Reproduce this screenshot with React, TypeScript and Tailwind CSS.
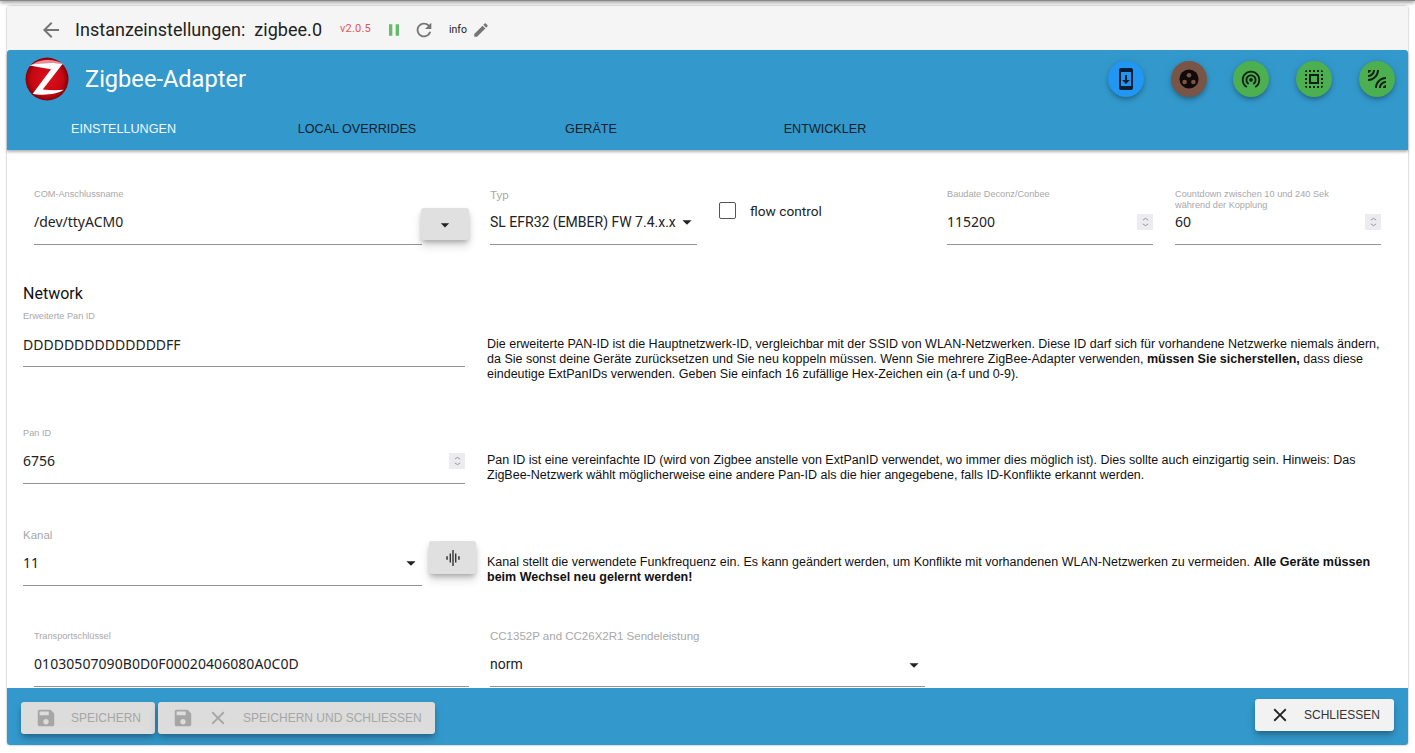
import React from 'react';

const FONT = 'font-["Roboto",sans-serif]';

const paths = {
	back: 'M20 11H7.83l5.59-5.59L12 4l-8 8 8 8 1.41-1.41L7.83 13H20v-2z',
	pause: 'M6 19h4V5H6v14zm8-14v14h4V5h-4z',
	refresh:
		'M17.65 6.35C16.2 4.9 14.21 4 12 4c-4.42 0-7.99 3.58-7.99 8s3.57 8 7.99 8c3.73 0 6.84-2.55 7.73-6h-2.08c-.82 2.33-3.04 4-5.65 4-3.31 0-6-2.69-6-6s2.69-6 6-6c1.66 0 3.14.69 4.22 1.78L13 11h7V4l-2.35 2.35z',
	edit: 'M3 17.25V21h3.75L17.81 9.94l-3.75-3.75L3 17.25zM20.71 7.04c.39-.39.39-1.02 0-1.41l-2.34-2.34c-.39-.39-1.02-.39-1.41 0l-1.83 1.83 3.75 3.75 1.83-1.83z',
	save: 'M17 3H5c-1.11 0-2 .9-2 2v14c0 1.1.89 2 2 2h14c1.1 0 2-.9 2-2V7l-4-4zm-5 16c-1.66 0-3-1.34-3-3s1.34-3 3-3 3 1.34 3 3-1.34 3-3 3zm3-10H5V5h10v4z',
	close:
		'M19 6.41L17.59 5 12 10.59 6.41 5 5 6.41 10.59 12 5 17.59 6.41 19 12 13.41 17.59 19 19 17.59 13.41 12z',
	drop: 'M7 10l5 5 5-5z',
	phone:
		'M17 1.01L7 1c-1.1 0-2 .9-2 2v18c0 1.1.9 2 2 2h10c1.1 0 2-.9 2-2V3c0-1.1-.9-1.99-2-1.99zM17 19H7V5h10v14zm-1-6h-3V8h-2v5H8l4 4 4-4z',
	tether:
		'M12 11c-1.1 0-2 .9-2 2s.9 2 2 2 2-.9 2-2-.9-2-2-2zm6 2c0-3.31-2.69-6-6-6s-6 2.69-6 6c0 2.22 1.21 4.15 3 5.19l1-1.74c-1.19-.7-2-1.97-2-3.45 0-2.21 1.79-4 4-4s4 1.79 4 4c0 1.48-.81 2.75-2 3.45l1 1.74c1.79-1.04 3-2.97 3-5.19zM12 3C6.48 3 2 7.48 2 13c0 3.7 2.01 6.92 4.99 8.65l1-1.73C5.61 18.53 4 15.96 4 13c0-4.42 3.58-8 8-8s8 3.58 8 8c0 2.96-1.61 5.53-4 6.92l1 1.73c2.99-1.73 5-4.95 5-8.65 0-5.52-4.48-10-10-10z',
	select:
		'M3 5h2V3c-1.1 0-2 .9-2 2zm0 8h2v-2H3v2zm4 8h2v-2H7v2zM3 9h2V7H3v2zm10-6h-2v2h2V3zm6 0v2h2c0-1.1-.9-2-2-2zM5 21v-2H3c0 1.1.9 2 2 2zm-2-4h2v-2H3v2zM9 3H7v2h2V3zm2 18h2v-2h-2v2zm8-8h2v-2h-2v2zm0 8c1.1 0 2-.9 2-2h-2v2zm0-12h2V7h-2v2zm0 8h2v-2h-2v2zm-4 4h2v-2h-2v2zm0-16h2V3h-2v2zM7 17h10V7H7v10zm2-8h6v6H9V9z',
	leak:
		'M6 3H3v3c1.66 0 3-1.34 3-3zm8 0h-2c0 4.97-4.03 9-9 9v2c6.07 0 11-4.93 11-11zm-4 0H8c0 2.76-2.24 5-5 5v2c3.87 0 7-3.13 7-7zm0 18h2c0-4.97 4.03-9 9-9v-2c-6.07 0-11 4.93-11 11zm8 0h3v-3c-1.66 0-3 1.34-3 3zm-4 0h2c0-2.76 2.24-5 5-5v-2c-3.87 0-7 3.13-7 7z',
	wave: 'M5.3 10.3h1.5v3.4H5.3zM8.6 7.5h1.4v9H8.6zM11.3 4h1.4v16h-1.4zM14 7.5h1.4v9H14zM17.2 10.3h1.5v3.4h-1.5z',
};

const Icon: React.FC<{ d: string; className?: string }> = ({ d, className }) => (
	<svg viewBox="0 0 24 24" fill="currentColor" className={className}>
		<path d={d} />
	</svg>
);

const Logo = () => (
	<svg viewBox="0 0 44 44" className="w-[44px] h-[44px] shrink-0">
		<defs>
			<radialGradient id="zb" cx="50%" cy="50%" r="52%">
				<stop offset="0%" stopColor="#e0101c" />
				<stop offset="72%" stopColor="#c40812" />
				<stop offset="100%" stopColor="#7a0008" />
			</radialGradient>
		</defs>
		<circle cx="22" cy="22" r="21.5" fill="url(#zb)" />
		<path d="M6 8.5 C14 1.5 30 1.5 38 7 C28 5.5 14 5.5 6 8.5z" fill="#f08a8f" />
		<path
			d="M4.3 8.3 C14 5.5 28 5.5 37.7 6.7 L17.7 32.5 C25 33.5 32 33.5 38.7 32.8 C32 38 16 38.5 7.7 36.7 L26 12.3 C18 11 10 9.5 4.3 8.3z"
			fill="#fff"
		/>
	</svg>
);

const Stepper = () => (
	<span className="w-4 h-4 bg-[#ebebf0] flex flex-col items-center justify-center gap-[2px] shrink-0">
		<svg viewBox="0 0 8 3.5" className="w-[7px] h-[4px] text-[#777]">
			<path d="M1 3l3-2 3 2" fill="none" stroke="currentColor" strokeWidth="0.8" />
		</svg>
		<svg viewBox="0 0 8 3.5" className="w-[7px] h-[4px] text-[#777]">
			<path d="M1 .5l3 2 3-2" fill="none" stroke="currentColor" strokeWidth="0.8" />
		</svg>
	</span>
);

const Field: React.FC<{
	label: React.ReactNode;
	value: string;
	small?: boolean;
	className?: string;
	right?: React.ReactNode;
	valueClass?: string;
}> = ({ label, value, small, className, right, valueClass }) => (
	<div className={className}>
		<div
			className={
				small
					? 'h-[14px] pt-[1px] text-[9.2px] leading-[11px] text-[#a8a8a8] font-["Liberation_Sans",sans-serif]'
					: 'h-[14px] text-[11.5px] leading-[12px] text-[#a8a8a8] font-["Liberation_Sans",sans-serif]'
			}
		>
			{label}
		</div>
		<div
			className={`h-[43px] border-b border-[#949494] flex items-center justify-between pb-[3px] text-[14px] text-[#222] whitespace-nowrap ${
				valueClass ?? "font-['Noto_Sans',sans-serif]"
			}`}
		>
			<span>{value}</span>
			{right}
		</div>
	</div>
);

const Drop = () => <Icon d={paths.drop} className="w-[22px] h-[22px] text-[#222] shrink-0" />;

const Desc: React.FC<{ children: React.ReactNode; className?: string }> = ({ children, className }) => (
	<p className={`text-[12.5px] leading-[15px] text-[#111] font-["Liberation_Sans",sans-serif] ${className ?? ''}`}>
		{children}
	</p>
);

const FabButton: React.FC<{ bg: string; children: React.ReactNode }> = ({ bg, children }) => (
	<div
		className={`w-[36px] h-[36px] rounded-full flex items-center justify-center text-[#111] shadow-[0_3px_5px_-1px_rgba(0,0,0,0.3),0_1px_10px_0_rgba(0,0,0,0.12)] ${bg}`}
	>
		{children}
	</div>
);

const tabs = [
	{ name: 'EINSTELLUNGEN', w: 'w-[233px]', color: 'text-[#f2f7fb]' },
	{ name: 'LOCAL OVERRIDES', w: 'w-[234px]', color: 'text-[#10202b]' },
	{ name: 'GERÄTE', w: 'w-[234px]', color: 'text-[#10202b]' },
	{ name: 'ENTWICKLER', w: 'w-[234px]', color: 'text-[#10202b]' },
];

const BTN_SHADOW = 'shadow-[0_3px_5px_-1px_rgba(0,0,0,0.25),0_6px_10px_0_rgba(0,0,0,0.14)]';

const App: React.FC = () => {
	return (
		<div className={`relative h-[753px] w-[1415px] overflow-hidden bg-white pt-[6px] ${FONT}`}>
			{/* shadow from the bar above the page */}
			<div className="absolute left-0 right-0 -top-[2px] h-[3px] bg-[#888] shadow-[0_1px_4px_rgba(0,0,0,0.6)]" />
			<div className="ml-[7px] mr-[7px] h-[739px] flex flex-col rounded-[3px] shadow-[0_0_2px_rgba(0,0,0,0.45)]">
				{/* title bar */}
				<div className="h-[44px] bg-[#f5f5f5] flex items-center pl-[32px] shrink-0 pt-[3px]">
					<Icon d={paths.back} className="w-[24px] h-[24px] text-[#757575]" />
					<span className="ml-[12px] text-[18px] tracking-[0.03px] text-[#222] whitespace-nowrap">
						Instanzeinstellungen:&nbsp; zigbee.0
					</span>
					<span className="ml-[18px] text-[11px] tracking-[0.2px] text-[#e0575b]">v2.0.5</span>
					<Icon d={paths.pause} className="ml-[13px] w-[20px] h-[20px] text-[#66bb6a]" />
					<Icon d={paths.refresh} className="ml-[9px] w-[22px] h-[22px] text-[#757575]" />
					<span className="ml-[14px] text-[10.5px] text-[#222]">info</span>
					<Icon d={paths.edit} className="ml-[5px] w-[18px] h-[18px] text-[#757575]" />
				</div>

				{/* blue header with tabs */}
				<div className="h-[100px] bg-[#3399cc] shrink-0 shadow-[0_2px_3px_rgba(0,0,0,0.3)] z-10 rounded-t-[3px]">
					<div className="h-[58px] flex items-center pl-[18px] pr-[13px]">
						<Logo />
						<span className="ml-[16px] pt-[2px] text-[23.6px] text-white">Zigbee-Adapter</span>
						<div className="ml-auto flex gap-[26.8px]">
							<FabButton bg="bg-[#2196f3]">
								<Icon d={paths.phone} className="w-[24px] h-[24px] text-[#0a1f33]" />
							</FabButton>
							<FabButton bg="bg-[#795548]">
								<svg viewBox="0 0 24 24" className="w-[24px] h-[24px]">
									<circle cx="12" cy="12" r="9.6" fill="#120a08" />
									<circle cx="12" cy="8.2" r="2.3" fill="#795548" />
									<circle cx="7.6" cy="15" r="2.3" fill="#795548" />
									<circle cx="16.4" cy="15" r="2.3" fill="#795548" />
								</svg>
							</FabButton>
							<FabButton bg="bg-[#4caf50]">
								<Icon d={paths.tether} className="w-[22px] h-[22px] text-[#0f1f10]" />
							</FabButton>
							<FabButton bg="bg-[#4caf50]">
								<Icon d={paths.select} className="w-[24px] h-[24px] text-[#0f1f10]" />
							</FabButton>
							<FabButton bg="bg-[#4caf50]">
								<Icon d={paths.leak} className="w-[24px] h-[24px] text-[#0f1f10]" />
							</FabButton>
						</div>
					</div>
					<div className="h-[42px] flex font-['Liberation_Sans',sans-serif]">
						{tabs.map((t) => (
							<div
								key={t.name}
								className={`${t.w} flex items-center justify-center text-[12.6px] leading-none whitespace-nowrap ${t.color}`}
							>
								{t.name}
							</div>
						))}
					</div>
				</div>

				{/* form */}
				<div className="h-[538px] shrink-0 overflow-hidden bg-white pl-[16px] pr-[16px]">
					<div className="flex pt-[38px] h-[134px]">
						<div className="ml-[11px] w-[435px] relative">
							<Field small label="COM-Anschlussname" value="/dev/ttyACM0" className="w-[388px]" />
							<div className={`absolute right-0 top-[20px] w-[48px] h-[32px] rounded-[3px] bg-[#e0e0e0] flex items-center justify-center ${BTN_SHADOW}`}>
								<Icon d={paths.drop} className="w-[20px] h-[20px] text-[#222] mt-[2px]" />
							</div>
						</div>
						<div className="ml-[21px] w-[207px] pt-[1px]">
							<Field label="Typ" value="SL EFR32 (EMBER) FW 7.4.x.x" valueClass="[&]:h-[42px] font-['Roboto',sans-serif]" right={<Drop />} />
						</div>
						<div className="ml-[22px] h-[20px] mt-[12px] flex items-center w-[228px] text-[13.7px] text-[#222]">
							<span className="w-[17px] h-[17px] rounded-[2px] border border-[#555] bg-white shrink-0" />
							<span className="ml-[14px] pt-[2px]">flow control</span>
						</div>
						<Field small label="Baudate Deconz/Conbee" value="115200" className="w-[206px]" right={<Stepper />} />
						<Field
							small
							label={
								<>
									Countdown zwischen 10 und 240 Sek
									<br />
									während der Kopplung
								</>
							}
							value="60"
							className="ml-[22px] w-[206px]"
							right={<Stepper />}
						/>
					</div>

					<div className="text-[16px] leading-[20px] text-[#111] h-[19px]">Network</div>

					<div className="flex mt-[7px] h-[117px]">
						<Field
							small
							label="Erweiterte Pan ID"
							value="DDDDDDDDDDDDDDFF"
							className="w-[442px] shrink-0"
							valueClass="font-['Noto_Sans',sans-serif] [&]:pb-[1px]"
						/>
						<Desc className="ml-[22px] mt-[27px] w-[902px]">
							Die erweiterte PAN-ID ist die Hauptnetzwerk-ID, vergleichbar mit der SSID von WLAN-Netzwerken. Diese ID darf
							sich für vorhandene Netzwerke niemals ändern, da Sie sonst deine Geräte zurücksetzen und Sie neu koppeln
							müssen. Wenn Sie mehrere ZigBee-Adapter verwenden, <b>müssen Sie sicherstellen,</b> dass diese eindeutige
							ExtPanIDs verwenden. Geben Sie einfach 16 zufällige Hex-Zeichen ein (a-f und 0-9).
						</Desc>
					</div>

					<div className="flex h-[102px]">
						<Field small label="Pan ID" value="6756" className="w-[442px] shrink-0" right={<Stepper />} />
						<Desc className="ml-[22px] mt-[26px] w-[902px]">
							Pan ID ist eine vereinfachte ID (wird von Zigbee anstelle von ExtPanID verwendet, wo immer dies möglich ist).
							Dies sollte auch einzigartig sein. Hinweis: Das ZigBee-Netzwerk wählt möglicherweise eine andere Pan-ID als
							die hier angegebene, falls ID-Konflikte erkannt werden.
						</Desc>
					</div>

					<div className="flex h-[101px]">
						<Field label="Kanal" value="11" className="w-[399px] shrink-0" right={<Drop />} />
						<div className={`ml-[7px] mt-[12px] w-[47px] h-[33px] rounded-[3px] bg-[#e0e0e0] flex items-center justify-center shrink-0 ${BTN_SHADOW}`}>
							<Icon d={paths.wave} className="w-[24px] h-[24px] text-[#333]" />
						</div>
						<Desc className="ml-[11px] mt-[26px] w-[902px]">
							Kanal stellt die verwendete Funkfrequenz ein. Es kann geändert werden, um Konflikte mit vorhandenen
							WLAN-Netzwerken zu vermeiden. <b>Alle Geräte müssen beim Wechsel neu gelernt werden!</b>
						</Desc>
					</div>

					<div className="flex">
						<Field
							small
							label="Transportschlüssel"
							value="01030507090B0D0F00020406080A0C0D"
							className="ml-[11px] w-[435px]"
							valueClass="font-['Noto_Sans',sans-serif] tracking-[0.06px]"
						/>
						<Field
							label="CC1352P and CC26X2R1 Sendeleistung"
							value="norm"
							className="ml-[21px] w-[435px]"
							valueClass="font-['Roboto',sans-serif] [&]:pb-[1px]"
							right={<Drop />}
						/>
					</div>
				</div>

				{/* footer */}
				<div className="h-[57px] bg-[#3399cc] shrink-0 flex items-start pt-[11px] pl-[14px] pr-[14px] gap-[3px] rounded-b-[3px] font-['Liberation_Sans',sans-serif]">
					<div className={`mt-[3px] h-[32px] w-[134px] rounded-[3px] bg-[#dcdcdc] flex items-center pl-[14px] text-[#a6a6a6] ${BTN_SHADOW}`}>
						<Icon d={paths.save} className="w-[22px] h-[22px] shrink-0" />
						<span className="ml-[14px] text-[12px] whitespace-nowrap">SPEICHERN</span>
					</div>
					<div className={`mt-[3px] h-[32px] w-[277px] rounded-[3px] bg-[#dcdcdc] flex items-center pl-[14px] text-[#a6a6a6] ${BTN_SHADOW}`}>
						<Icon d={paths.save} className="w-[22px] h-[22px] shrink-0" />
						<Icon d={paths.close} className="ml-[13px] w-[22px] h-[22px] shrink-0" />
						<span className="ml-[14px] text-[12px] whitespace-nowrap">SPEICHERN UND SCHLIESSEN</span>
					</div>
					<div className={`ml-auto h-[32px] w-[139px] rounded-[3px] bg-[#f2f2f2] flex items-center pl-[14px] text-[#333] ${BTN_SHADOW}`}>
						<Icon d={paths.close} className="w-[22px] h-[22px] shrink-0 text-[#222]" />
						<span className="ml-[13px] text-[12px] whitespace-nowrap">SCHLIESSEN</span>
					</div>
				</div>
			</div>
		</div>
	);
};

export default App;
